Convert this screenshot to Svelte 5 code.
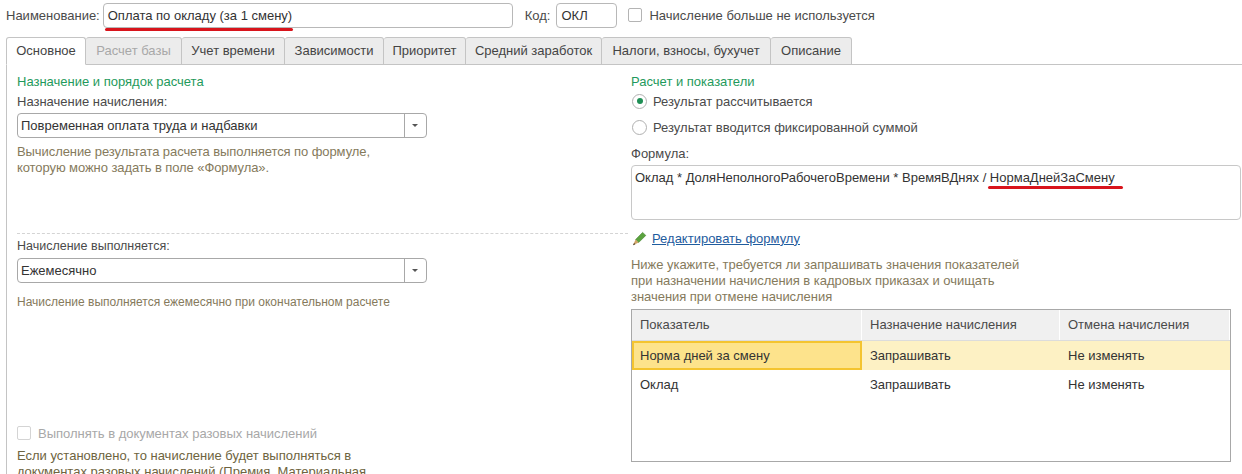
<script lang="ts">
  const tabs = [
    { label: 'Основное', width: 80, active: true },
    { label: 'Расчет базы', width: 96, disabled: true },
    { label: 'Учет времени', width: 103 },
    { label: 'Зависимости', width: 99 },
    { label: 'Приоритет', width: 82 },
    { label: 'Средний заработок', width: 136 },
    { label: 'Налоги, взносы, бухучет', width: 169 },
    { label: 'Описание', width: 81 },
  ];

  const rows = [
    { name: 'Норма дней за смену', assign: 'Запрашивать', cancel: 'Не изменять', current: true },
    { name: 'Оклад', assign: 'Запрашивать', cancel: 'Не изменять', current: false },
  ];
</script>

<div class="page">
  <header class="top">
    <span class="label">Наименование:</span>
    <div class="input name">
      Оплата по окладу (за 1 смену)
      <span class="mark name-mark"></span>
    </div>
    <span class="label code-label">Код:</span>
    <div class="input code">ОКЛ</div>
    <span class="check top-check"></span>
    <span class="label">Начисление больше не используется</span>
  </header>

  <nav class="tabs">
    {#each tabs as tab}
      <div class="tab" class:active={tab.active} class:disabled={tab.disabled} style="width: {tab.width}px">{tab.label}</div>
    {/each}
  </nav>

  <main class="panel">
    <section class="left">
      <div class="upper">
        <h2>Назначение и порядок расчета</h2>
        <div class="label field-label">Назначение начисления:</div>
        <div class="select">
          <span>Повременная оплата труда и надбавки</span>
          <span class="arrow"></span>
        </div>
        <p class="hint">Вычисление результата расчета выполняется по формуле,<br />которую можно задать в поле «Формула».</p>
      </div>
      <div class="lower">
        <div class="label field-label">Начисление выполняется:</div>
        <div class="select">
          <span>Ежемесячно</span>
          <span class="arrow"></span>
        </div>
        <p class="hint monthly">Начисление выполняется ежемесячно при окончательном расчете</p>
        <div class="once">
          <span class="check off"></span>
          <span class="off-text">Выполнять в документах разовых начислений</span>
        </div>
        <p class="hint dark">Если установлено, то начисление будет выполняться в<br />документах разовых начислений (Премия, Материальная</p>
      </div>
    </section>

    <section class="right">
      <h2>Расчет и показатели</h2>
      <div class="radio-row first">
        <span class="radio on"></span>
        <span class="label">Результат рассчитывается</span>
      </div>
      <div class="radio-row">
        <span class="radio"></span>
        <span class="label">Результат вводится фиксированной суммой</span>
      </div>
      <div class="label formula-label">Формула:</div>
      <div class="formula">
        Оклад * ДоляНеполногоРабочегоВремени * ВремяВДнях / НормаДнейЗаСмену
        <span class="mark formula-mark"></span>
      </div>
      <div class="edit">
        <svg width="15" height="15" viewBox="0 0 15 15" aria-hidden="true">
          <path d="M3.6 8.6 10.6 1.4l3.2 3L6.6 11.6z" fill="#5ba33f" stroke="#3f7f2b" stroke-width=".6" />
          <path d="M3.6 8.6 6.6 11.6 1 14.2z" fill="#d0a468" />
          <path d="M2 12 3.4 13.2 1 14.2z" fill="#4a3a28" />
        </svg>
        <a href="#edit">Редактировать формулу</a>
      </div>
      <p class="hint">Ниже укажите, требуется ли запрашивать значения показателей<br />при назначении начисления в кадровых приказах и очищать<br />значения при отмене начисления</p>
      <div class="table">
        <div class="head">
          <div>Показатель</div>
          <div>Назначение начисления</div>
          <div>Отмена начисления</div>
        </div>
        {#each rows as row}
          <div class="row" class:current={row.current}>
            <div class="cell" class:focus={row.current}>{row.name}</div>
            <div class="cell">{row.assign}</div>
            <div class="cell">{row.cancel}</div>
          </div>
        {/each}
      </div>
    </section>
  </main>
</div>

<style>
  :global(body) {
    margin: 0;
    background: #fff;
  }

  .page {
    width: 1242px;
    height: 474px;
    overflow: hidden;
    font-family: 'Liberation Sans', Arial, sans-serif;
    font-size: 13px;
    color: #3a3a3a;
    box-sizing: border-box;
  }

  .top {
    display: flex;
    align-items: center;
    height: 24px;
    padding: 3px 0 0 6px;
  }

  .label {
    color: #4a4a4a;
  }

  .input {
    position: relative;
    box-sizing: border-box;
    height: 25px;
    line-height: 23px;
    border: 1px solid #b8b8b8;
    border-radius: 4px;
    padding-left: 4px;
    color: #333;
  }

  .name {
    width: 410px;
    margin-left: 3px;
  }

  .code-label {
    margin-left: 12px;
  }

  .code {
    width: 61px;
    margin-left: 6px;
  }

  .check {
    box-sizing: border-box;
    display: inline-block;
    width: 14px;
    height: 14px;
    border: 1px solid #b4b4b4;
    border-radius: 2px;
    background: #fff;
    flex: none;
  }

  .top-check {
    margin: 0 7px 0 11px;
  }

  .mark {
    position: absolute;
    height: 3px;
    border-radius: 2px;
    background: #d8141c;
  }

  .name-mark {
    left: 1px;
    bottom: -4px;
    width: 188px;
  }

  .tabs {
    display: flex;
    margin: 10px 0 0 6px;
    height: 27px;
  }

  .tab {
    box-sizing: border-box;
    height: 28px;
    line-height: 26px;
    text-align: center;
    white-space: nowrap;
    border: 1px solid #c4c4c4;
    border-left: none;
    border-radius: 3px 3px 0 0;
    background: #ececec;
    color: #444;
    position: relative;
  }

  .tab.active {
    border-left: 1px solid #c4c4c4;
    border-bottom: 1px solid #fff;
    background: #fff;
    z-index: 1;
  }

  .tab.disabled {
    color: #a8a8a8;
  }

  .panel {
    display: grid;
    grid-template-columns: 624px 611px;
    margin-left: 6px;
    height: 410px;
    border-top: 1px solid #c4c4c4;
    border-left: 1px solid #c4c4c4;
    box-sizing: border-box;
  }

  .left {
    padding: 9px 0 0 10px;
    min-width: 0;
  }

  .right {
    padding: 9px 0 0 0;
    min-width: 0;
  }

  h2 {
    margin: 0;
    font-size: 13px;
    font-weight: 400;
    line-height: 15px;
    color: #1f9a5c;
  }

  .field-label {
    line-height: 15px;
    margin-top: 5px;
  }

  .select {
    display: flex;
    align-items: center;
    justify-content: space-between;
    box-sizing: border-box;
    width: 410px;
    height: 25px;
    margin-top: 4px;
    border: 1px solid #a8a8a8;
    border-radius: 4px;
    padding-left: 3px;
    color: #333;
  }

  .arrow {
    width: 21px;
    height: 100%;
    border-left: 1px solid #a8a8a8;
    position: relative;
  }

  .arrow::after {
    content: '';
    position: absolute;
    left: 7px;
    top: 10px;
    border: 3px solid transparent;
    border-top: 3px solid #555;
    border-bottom: none;
  }

  .hint {
    margin: 0;
    line-height: 16px;
    color: #857a5c;
  }

  .upper {
    height: 159px;
    border-bottom: 1px dashed #d4d4d4;
    margin-right: 3px;
  }

  .upper .hint {
    margin-top: 6px;
    letter-spacing: -0.08px;
  }

  .lower .field-label {
    margin-top: 5px;
    font-size: 12.5px;
  }

  .hint.monthly {
    margin-top: 11px;
    font-size: 12px;
  }

  .once {
    display: flex;
    align-items: center;
    gap: 7px;
    margin-top: 115px;
    height: 16px;
  }

  .check.off {
    border-color: #d4d4d4;
  }

  .off-text {
    color: #a8a8a8;
  }

  .hint.dark {
    margin-top: 7px;
    color: #6e6440;
  }

  .radio-row {
    display: flex;
    align-items: center;
    gap: 6px;
    height: 16px;
    margin-top: 10px;
  }

  .radio-row.first {
    margin-top: 4px;
  }

  .radio {
    box-sizing: border-box;
    width: 15px;
    height: 15px;
    margin-left: 1px;
    border: 1px solid #b0b0b0;
    border-radius: 50%;
    position: relative;
    flex: none;
  }

  .radio.on::after {
    content: '';
    position: absolute;
    left: 3.5px;
    top: 3.5px;
    width: 6px;
    height: 6px;
    border-radius: 50%;
    background: #1f8f55;
  }

  .formula-label {
    line-height: 15px;
    margin-top: 11px;
  }

  .formula {
    position: relative;
    box-sizing: border-box;
    width: 610px;
    height: 55px;
    margin-top: 4px;
    padding: 4px 3px;
    line-height: 15px;
    border: 1px solid #c8c8c8;
    border-radius: 4px;
    color: #333;
  }

  .formula-mark {
    left: 356px;
    top: 20px;
    width: 135px;
  }

  .edit {
    display: flex;
    align-items: center;
    gap: 5px;
    height: 16px;
    margin-top: 10px;
    padding-left: 1px;
  }

  .edit svg {
    flex: none;
  }

  .edit a {
    color: #1f5c9e;
  }

  .right > .hint {
    margin-top: 11px;
    letter-spacing: -0.04px;
  }

  .table {
    box-sizing: border-box;
    width: 600px;
    height: 153px;
    margin-top: 4px;
    border: 1px solid #a8a8a8;
  }

  .head,
  .row {
    display: grid;
    grid-template-columns: 230px 198px 1fr;
  }

  .head {
    height: 31px;
    line-height: 30px;
    background: #f0f0f0;
    border-bottom: 1px solid #dcdcdc;
    box-sizing: border-box;
    color: #4a4a4a;
  }

  .head > div {
    padding-left: 8px;
    border-right: 1px solid #fff;
  }

  .row {
    height: 29px;
    line-height: 29px;
    color: #333;
  }

  .cell {
    padding-left: 8px;
    box-sizing: border-box;
  }

  .row.current {
    background: #fdf1c4;
  }

  .cell.focus {
    background: #fde38c;
    border: 2px solid #f4c430;
    padding-left: 6px;
    line-height: 25px;
  }
</style>
